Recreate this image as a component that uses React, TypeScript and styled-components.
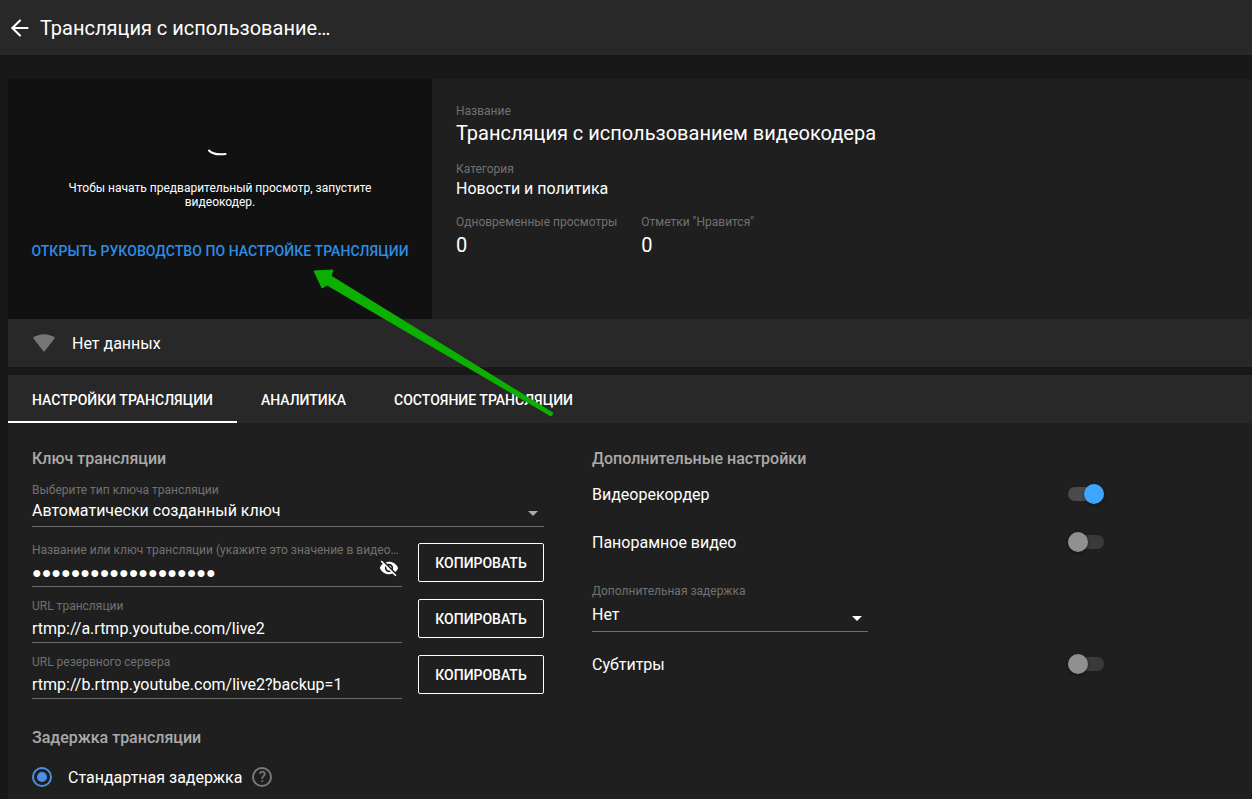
import React from 'react';
import styled, { createGlobalStyle } from 'styled-components';
import { ArrowLeft } from 'lucide-react';

const GlobalStyle = createGlobalStyle`
  html, body {
    margin: 0;
    padding: 0;
    height: 799px;
    overflow: hidden;
    background: #181818;
    font-family: Roboto, 'Liberation Sans', sans-serif;
    color: #fff;
  }
`;

const Page = styled.div`
  position: relative;
  width: 1252px;
  height: 799px;
  overflow: hidden;
`;

const Header = styled.header`
  height: 55px;
  background: #282828;
  display: flex;
  align-items: center;
  padding-left: 7px;
  gap: 7px;
  font-size: 20px;
  line-height: 54px;
`;

const Main = styled.main`
  margin: 24px 0 0 8px;
`;

const Top = styled.section`
  display: flex;
  height: 240px;
  background: #1f1f1f;
`;

const Preview = styled.div`
  width: 424px;
  background: #111111;
  display: flex;
  flex-direction: column;
  align-items: center;
  padding-top: 70px;
  box-sizing: border-box;
`;

const Spinner = styled.svg`
  width: 24px;
  height: 14px;
  display: block;
  margin-left: -4px;
`;

const PreviewText = styled.p`
  width: 340px;
  margin: 18px 0 0;
  text-align: center;
  font-size: 12px;
  line-height: 14px;
`;

const GuideLink = styled.a`
  margin-top: 34px;
  font-size: 14px;
  line-height: 16px;
  font-weight: 500;
  letter-spacing: 0.06px;
  color: #2c8ee6;
`;

const Info = styled.div`
  padding: 24px 24px 0;
`;

const Label = styled.div`
  font-size: 12px;
  line-height: 16px;
  color: #717171;
`;

const InfoTitle = styled.div`
  font-size: 20px;
  line-height: 28px;
  margin-bottom: 14px;
`;

const InfoValue = styled.div`
  font-size: 16px;
  line-height: 22px;
  margin-top: 1px;
`;

const Stats = styled.div`
  display: flex;
  gap: 24px;
  margin-top: 14px;
`;

const StatValue = styled.div`
  font-size: 20px;
  line-height: 24px;
  margin-top: 3px;
`;

const StatusBar = styled.div`
  height: 48px;
  background: #282828;
  display: flex;
  align-items: center;
  padding-left: 24px;
  gap: 16px;
  font-size: 16px;
`;

const Tabs = styled.nav`
  margin-top: 8px;
  height: 48px;
  background: #282828;
  display: flex;
`;

const Tab = styled.div<{ $active?: boolean }>`
  box-sizing: border-box;
  height: 48px;
  padding: 4px 24px 0;
  display: flex;
  align-items: center;
  font-size: 14px;
  font-weight: 500;
  letter-spacing: 0.01px;
  border-bottom: 2px solid ${(p) => (p.$active ? '#fff' : 'transparent')};
`;

const Settings = styled.section`
  background: #1f1f1f;
  height: 376px;
  padding: 25px 24px 0;
  box-sizing: border-box;
  display: grid;
  grid-template-columns: 512px 512px;
  column-gap: 48px;
`;

const Column = styled.div`
  display: flex;
  flex-direction: column;
`;

const SectionTitle = styled.h3<{ $gap?: number }>`
  margin: ${(p) => p.$gap || 0}px 0 0;
  font-size: 16px;
  line-height: 22px;
  font-weight: 500;
  color: #aaaaaa;
`;

const Field = styled.div<{ $width?: number; $height: number; $gap?: number }>`
  width: ${(p) => (p.$width ? `${p.$width}px` : '100%')};
  height: ${(p) => p.$height}px;
  margin-top: ${(p) => p.$gap || 0}px;
  box-sizing: border-box;
  position: relative;
  border-bottom: 1px solid #6e6e6e;
`;

const FieldValue = styled.div<{ $gap: number }>`
  font-size: 16px;
  line-height: 21px;
  margin-top: ${(p) => p.$gap}px;
  color: #fff;
  white-space: nowrap;
`;

const Caret = styled.span<{ $color: string }>`
  position: absolute;
  right: 6px;
  bottom: 10px;
  border-left: 5px solid transparent;
  border-right: 5px solid transparent;
  border-top: 5px solid ${(p) => p.$color};
`;

const EyeIcon = styled.svg`
  position: absolute;
  right: 3px;
  bottom: 8px;
  width: 20px;
  height: 20px;
  fill: #fff;
`;

const Rows = styled.div`
  margin-top: 15px;
`;

const Row = styled.div`
  display: flex;
  justify-content: space-between;
  align-items: flex-start;
  height: 56px;
`;

const TruncLabel = styled(Label)`
  white-space: nowrap;
`;

const CopyButton = styled.button`
  width: 126px;
  height: 39px;
  margin-top: 1px;
  box-sizing: border-box;
  background: transparent;
  border: 1px solid #fff;
  border-radius: 2px;
  color: #fff;
  font-family: inherit;
  font-size: 14px;
  font-weight: 500;
`;

const RadioRow = styled.div`
  display: flex;
  align-items: center;
  margin-top: 16px;
  height: 24px;
  font-size: 16px;
`;

const Radio = styled.span`
  width: 20px;
  height: 20px;
  box-sizing: border-box;
  border: 2px solid #4a90e0;
  border-radius: 50%;
  display: flex;
  align-items: center;
  justify-content: center;
  margin-right: 16px;
  &::after {
    content: '';
    width: 10px;
    height: 10px;
    border-radius: 50%;
    background: #4a90e8;
  }
`;

const HelpIcon = styled.span`
  width: 20px;
  height: 20px;
  box-sizing: border-box;
  margin-left: 10px;
  border: 2px solid #7a7a7a;
  border-radius: 50%;
  color: #7a7a7a;
  font-size: 15px;
  font-weight: 500;
  display: flex;
  align-items: center;
  justify-content: center;
`;

const ToggleRow = styled.div<{ $gap: number }>`
  display: flex;
  justify-content: space-between;
  align-items: center;
  height: 24px;
  margin-top: ${(p) => p.$gap}px;
  font-size: 16px;
`;

const Toggle = styled.span<{ $on?: boolean }>`
  position: relative;
  display: block;
  width: 36px;
  height: 14px;
  border-radius: 7px;
  background: ${(p) => (p.$on ? '#4a4a4a' : '#3a3a3a')};
  &::after {
    content: '';
    position: absolute;
    top: -3px;
    ${(p) => (p.$on ? 'right: 0;' : 'left: 0;')}
    width: 20px;
    height: 20px;
    border-radius: 50%;
    background: ${(p) => (p.$on ? '#3ea6ff' : '#909090')};
    box-shadow: 0 1px 3px rgba(0, 0, 0, 0.5);
  }
`;

const ArrowOverlay = styled.svg`
  position: absolute;
  left: 0;
  top: 0;
  width: 1252px;
  height: 799px;
  pointer-events: none;
`;

const CopyRow = ({ label, value, dots }: { label: string; value: string; dots?: boolean }) => (
  <Row>
    <Field $width={370} $height={45}>
      <TruncLabel>{label}</TruncLabel>
      <FieldValue $gap={4}>{value}</FieldValue>
      {dots && (
        <EyeIcon viewBox="0 0 24 24">
          <path d="M12 7c2.76 0 5 2.24 5 5 0 .65-.13 1.26-.36 1.83l2.92 2.92c1.51-1.26 2.7-2.89 3.43-4.75-1.73-4.39-6-7.5-11-7.5-1.4 0-2.74.25-3.98.7l2.16 2.16C10.74 7.13 11.35 7 12 7zM2 4.27l2.28 2.28.46.46C3.08 8.3 1.78 10.02 1 12c1.73 4.39 6 7.5 11 7.5 1.55 0 3.03-.3 4.38-.84l.42.42L19.73 22 21 20.73 3.27 3 2 4.27zM7.53 9.8l1.55 1.55c-.05.21-.08.43-.08.65 0 1.66 1.34 3 3 3 .22 0 .44-.03.65-.08l1.55 1.55c-.67.33-1.41.53-2.2.53-2.76 0-5-2.24-5-5 0-.79.2-1.53.53-2.2zm4.31-.78l3.15 3.15.02-.16c0-1.66-1.34-3-3-3l-.17.01z" />
        </EyeIcon>
      )}
    </Field>
    <CopyButton>КОПИРОВАТЬ</CopyButton>
  </Row>
);

export default function App() {
  return (
    <Page>
      <GlobalStyle />
      <Header>
        <ArrowLeft size={26} color="#fff" strokeWidth={1.9} />
        <span>Трансляция с использование…</span>
      </Header>
      <Main>
        <Top>
          <Preview>
            <Spinner viewBox="0 0 24 14">
              <path d="M3 1.5 C5.5 4.5 10 6 19.5 5" fill="none" stroke="#fff" strokeWidth="2" strokeLinecap="round" />
            </Spinner>
            <PreviewText>Чтобы начать предварительный просмотр, запустите видеокодер.</PreviewText>
            <GuideLink>ОТКРЫТЬ РУКОВОДСТВО ПО НАСТРОЙКЕ ТРАНСЛЯЦИИ</GuideLink>
          </Preview>
          <Info>
            <Label>Название</Label>
            <InfoTitle>Трансляция с использованием видеокодера</InfoTitle>
            <Label>Категория</Label>
            <InfoValue>Новости и политика</InfoValue>
            <Stats>
              <div>
                <Label>Одновременные просмотры</Label>
                <StatValue>0</StatValue>
              </div>
              <div>
                <Label>Отметки "Нравится"</Label>
                <StatValue>0</StatValue>
              </div>
            </Stats>
          </Info>
        </Top>
        <StatusBar>
          <svg width="24" height="20" viewBox="0 0 24 20">
            <path d="M12 19 L1 5 C7 0 17 0 23 5 Z" fill="#757575" />
          </svg>
          <span>Нет данных</span>
        </StatusBar>
        <Tabs>
          <Tab $active>НАСТРОЙКИ ТРАНСЛЯЦИИ</Tab>
          <Tab>АНАЛИТИКА</Tab>
          <Tab>СОСТОЯНИЕ ТРАНСЛЯЦИИ</Tab>
        </Tabs>
        <Settings>
          <Column>
            <SectionTitle>Ключ трансляции</SectionTitle>
            <Field $height={45} $gap={12}>
              <Label>Выберите тип ключа трансляции</Label>
              <FieldValue $gap={2}>Автоматически созданный ключ</FieldValue>
              <Caret $color="#aaaaaa" />
            </Field>
            <Rows>
              <CopyRow label="Название или ключ трансляции (укажите это значение в видео…" value={'●'.repeat(19)} dots />
              <CopyRow label="URL трансляции" value="rtmp://a.rtmp.youtube.com/live2" />
              <CopyRow label="URL резервного сервера" value="rtmp://b.rtmp.youtube.com/live2?backup=1" />
            </Rows>
            <SectionTitle $gap={17}>Задержка трансляции</SectionTitle>
            <RadioRow>
              <Radio />
              <span>Стандартная задержка</span>
              <HelpIcon>?</HelpIcon>
            </RadioRow>
          </Column>
          <Column>
            <SectionTitle>Дополнительные настройки</SectionTitle>
            <ToggleRow $gap={12}>
              <span>Видеорекордер</span>
              <Toggle $on />
            </ToggleRow>
            <ToggleRow $gap={24}>
              <span>Панорамное видео</span>
              <Toggle />
            </ToggleRow>
            <Field $width={276} $height={49} $gap={29}>
              <Label>Дополнительная задержка</Label>
              <FieldValue $gap={5}>Нет</FieldValue>
              <Caret $color="#fff" />
            </Field>
            <ToggleRow $gap={20}>
              <span>Субтитры</span>
              <Toggle />
            </ToggleRow>
          </Column>
        </Settings>
      </Main>
      <ArrowOverlay viewBox="0 0 1252 799">
        <path d="M314 271 L333 270 L331 276 L553 413 L551 416 L327 285 L322 288 Z" fill="#0cb000" stroke="#0cb000" strokeWidth="1" strokeLinejoin="round" />
      </ArrowOverlay>
    </Page>
  );
}
